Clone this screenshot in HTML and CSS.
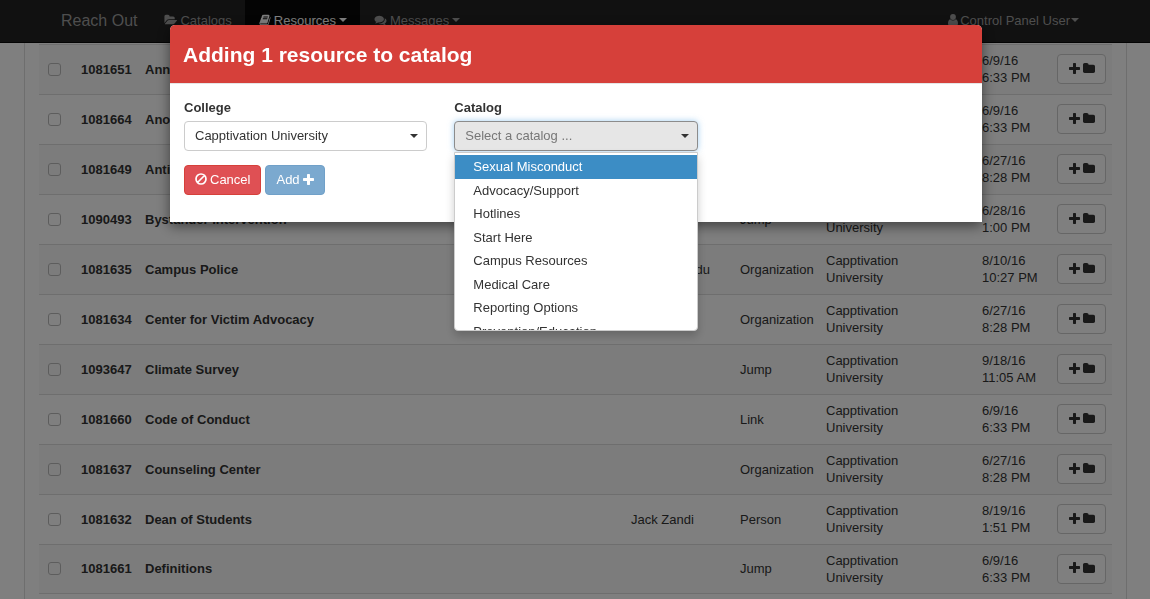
FILE: index.html
```html
<!DOCTYPE html>
<html lang="en">
<head>
    <meta charset="UTF-8" />
    <title>Reach Out | Resources</title>
    <meta name="viewport" content="width=device-width, initial-scale=1.0" />
    <link rel="stylesheet" href="styles.css">
</head>
<body>

    <!-- Icon set -->
    <svg class="icon-defs" aria-hidden="true">
        <symbol id="i-folder-open" viewBox="0 0 1943 1792"><path d="M1943 952q0 31-31 66l-336 396q-43 51-120.500 86.500t-143.500 35.500h-1088q-34 0-60.500-13t-26.500-43q0-31 31-66l336-396q43-51 120.500-86.500t143.500-35.500h1088q34 0 60.500 13t26.500 43zm-343-344v160h-832q-94 0-197 47.500t-164 119.500l-337 396-5 6q0-4-.5-12.500t-.5-12.500v-960q0-92 66-158t158-66h320q92 0 158 66t66 158v32h544q92 0 158 66t66 158z"/></symbol>
        <symbol id="i-book" viewBox="64 0 1664 1792"><path d="M1703 478q40 57 18 129l-275 906q-19 64-76.500 107.500t-122.500 43.500h-923q-77 0-148.500-53.500t-99.500-131.500q-24-67-2-127 0-4 3-27t4-37q1-8-3-21.500t-3-19.500q2-11 8-21t16.500-23.500 16.500-23.500q23-38 45-91.500t30-91.500q3-10 .5-30t-.5-28q3-11 17-28t17-23q21-36 42-92t25-90q1-9-2.500-32t.5-28q4-13 22-30.500t22-22.500q19-26 42.500-84.500t27.500-96.500q1-8-3-25.500t-2-26.500q2-8 9-18t18-23 17-21q8-12 16.500-30.500t15-35 16-36 19.500-32 26.500-23.500 36-11.500 47.500 5.500l-1 3q38-9 51-9h761q74 0 114 56t18 130l-274 906q-36 119-71.500 153.500t-128.500 34.500h-869q-27 0-38 15-11 16-1 43 24 70 144 70h923q29 0 56-15.500t35-41.500l300-987q7-22 5-57 38 15 59 43zm-1064 2q-4 13 2 22.500t20 9.500h608q13 0 25.500-9.500t16.500-22.500l21-64q4-13-2-22.500t-20-9.500h-608q-13 0-25.500 9.500t-16.500 22.500zm-83 256q-4 13 2 22.500t20 9.500h608q13 0 25.500-9.500t16.500-22.500l21-64q4-13-2-22.500t-20-9.500h-608q-13 0-25.500 9.500t-16.500 22.500z"/></symbol>
        <symbol id="i-comments" viewBox="0 0 1792 1792"><path d="M1408 768q0 139-94 257t-256.500 186.500-353.500 68.500q-86 0-176-16-124 88-278 128-36 9-86 16h-3q-11 0-20.500-8t-11.500-21q-1-3-1-6.500t.5-6.500 2-6l2.500-5 3.500-5.500 4-5 4.500-5 4-4.500q5-6 23-25t26-29.500 22.500-29 25-38.500 20.500-44q-124-72-195-177t-71-224q0-139 94-257t256.500-186.500 353.500-68.500 353.500 68.500 256.500 186.500 94 257zm384 256q0 120-71 224.500t-195 176.500q10 24 20.500 44t25 38.500 22.500 29 26 29.500 23 25q1 1 4 4.500t4.500 5 4 5 3.500 5.500l2.500 5 2 6 .5 6.500-1 6.500q-3 14-13 22t-22 7q-50-7-86-16-154-40-278-128-90 16-176 16-271 0-472-132 58 4 88 4 161 0 309-45t264-129q125-92 192-212t67-254q0-77-23-152 129 71 204 178t75 230z"/></symbol>
        <symbol id="i-user" viewBox="0 0 10 12"><circle cx="5" cy="3" r="2.900"/><path d="M2.200 5.300C.7 5.600 0 7.400 0 9.500 0 11 .9 12 2.200 12h5.600C9.100 12 10 11 10 9.500 10 7.400 9.300 5.600 7.800 5.300a3.800 3.800 0 0 1-5.600 0z"/></symbol>
        <symbol id="i-ban" viewBox="0 0 12 12"><path d="M6 1a5 5 0 1 0 0 10A5 5 0 0 0 6 1zM2.500 9.500l7-7" fill="none" stroke="currentColor" stroke-width="1.700"/></symbol>
        <symbol id="i-plus" viewBox="192 128 1408 1408"><path d="M1600 736v192q0 40-28 68t-68 28h-416v416q0 40-28 68t-68 28h-192q-40 0-68-28t-28-68v-416h-416q-40 0-68-28t-28-68v-192q0-40 28-68t68-28h416v-416q0-40 28-68t68-28h192q40 0 68 28t28 68v416h416q40 0 68 28t28 68z"/></symbol>
        <symbol id="i-folder" viewBox="64 128 1664 1408"><path d="M1728 608v704q0 92-66 158t-158 66h-1216q-92 0-158-66t-66-158v-960q0-92 66-158t158-66h320q92 0 158 66t66 158v32h672q92 0 158 66t66 158z"/></symbol>
    </svg>

    <nav class="navbar">
        <a class="brand" href="#">Reach Out</a>
        <a class="nav-link" href="#"><svg class="icon icon-wide"><use href="#i-folder-open"/></svg>Catalogs</a>
        <a class="nav-link active" href="#"><svg class="icon"><use href="#i-book"/></svg>Resources<span class="caret"></span></a>
        <a class="nav-link" href="#"><svg class="icon icon-wide"><use href="#i-comments"/></svg>Messages<span class="caret"></span></a>
        <a class="nav-link user-link" href="#"><svg class="icon icon-user"><use href="#i-user"/></svg>Control Panel User<span class="caret"></span></a>
    </nav>

    <main class="panel">
        <table class="resources">
            <colgroup>
                <col class="col-check"><col class="col-id"><col class="col-name"><col class="col-contact">
                <col class="col-type"><col class="col-college"><col class="col-date"><col class="col-add">
            </colgroup>
            <tbody id="resourceRows"></tbody>
        </table>
    </main>

    <div class="backdrop"></div>

    <div class="modal" role="dialog" aria-labelledby="modalTitle">
        <form class="modal-dialog">
            <div class="modal-header">
                <h1 id="modalTitle">Adding 1 resource to catalog</h1>
            </div>
            <div class="modal-body">
                <div class="fields">
                    <div class="field">
                        <label for="college">College</label>
                        <div class="picker">
                            <select id="college"><option>Capptivation University</option></select>
                            <span class="caret"></span>
                        </div>
                    </div>
                    <div class="field">
                        <label for="catalog">Catalog</label>
                        <div class="picker open">
                            <select id="catalog"><option>Select a catalog ...</option></select>
                            <span class="caret"></span>
                            <ul class="menu" role="listbox" aria-label="Catalog">
                                <li class="selected" role="option" aria-selected="true">Sexual Misconduct</li>
                                <li role="option">Advocacy/Support</li>
                                <li role="option">Hotlines</li>
                                <li role="option">Start Here</li>
                                <li role="option">Campus Resources</li>
                                <li role="option">Medical Care</li>
                                <li role="option">Reporting Options</li>
                                <li role="option">Prevention/Education</li>
                            </ul>
                        </div>
                    </div>
                </div>
                <div class="actions">
                    <button type="button" class="btn btn-danger"><svg class="icon"><use href="#i-ban"/></svg>Cancel</button>
                    <button type="button" class="btn btn-primary" disabled>Add<svg class="icon icon-plus"><use href="#i-plus"/></svg></button>
                </div>
            </div>
        </form>
    </div>

    <script src="script.js"></script>
</body>
</html>
```
FILE: styles.css
```css
* {
    box-sizing: border-box;
}

body {
    display: flex;
    flex-direction: column;
    height: 100vh;
    margin: 0;
    overflow: hidden; /* page does not scroll while the modal is open */
    background: #fff;
    color: #333;
    font-family: "Liberation Sans", Arial, sans-serif;
    font-size: 13px;
    line-height: 17px;
}

.icon-defs {
    display: none;
}

.icon {
    width: 12px;
    height: 12px;
    flex: none;
    fill: currentColor;
}

.icon-wide {
    width: 13px;
}

.icon-user {
    width: 10px;
}

.icon-plus {
    width: 11px;
    height: 11px;
}

.caret {
    border: 4px solid transparent;
    border-top-color: currentColor;
    border-bottom: 0;
}

/* Navbar */
.navbar {
    display: flex;
    flex: none;
    height: 43px;
    padding: 0 58px 0 61px;
    background: #222;
    border-bottom: 1px solid #080808;
}

.navbar a {
    display: flex;
    align-items: center;
    padding-bottom: 2px;
    color: #9d9d9d;
    text-decoration: none;
}

.navbar .brand {
    margin-right: 13px;
    font-size: 16px;
}

.navbar .nav-link {
    gap: 3px;
    padding-left: 14px;
    padding-right: 13px;
}

.navbar .active {
    background: #080808;
    color: #fff;
}

.navbar .user-link {
    margin-left: auto;
    gap: 2px;
}

.user-link .caret {
    margin-left: -1px;
}

/* Resource list */
.panel {
    flex: 1 0 auto;
    margin: 0 23px 0 24px;
    padding: 1px 14px;
    border: 1px solid #ddd;
    border-width: 0 1px;
}

.resources {
    width: 100%;
    table-layout: fixed;
    border-collapse: separate;
    border-spacing: 0;
}

.resources td {
    height: 50px;
    padding: 0 7px 1px;
    border-top: 1px solid #ddd;
}

.resources tr:nth-child(odd) {
    background: #f9f9f9;
}

.resources tr:last-child td {
    border-bottom: 1px solid #ddd;
}

.resources .strong {
    font-weight: bold;
}

.col-check { width: 35px; }
.col-id { width: 64px; }
.col-contact { width: 109px; }
.col-type { width: 86px; }
.col-college { width: 156px; }
.col-date { width: 75px; }
.col-add { width: 62px; }

.resources input {
    display: block;
    appearance: none;
    width: 13px;
    height: 13px;
    margin: 0 2px;
    border: 1px solid #bbb;
    border-radius: 3px;
}

.btn-add {
    display: flex;
    align-items: center;
    justify-content: center;
    gap: 3px;
    width: 49px;
    height: 30px;
    padding: 0 0 2px;
    background: #fff;
    border: 1px solid #ccc;
    border-radius: 4px;
    color: #333;
}

/* Modal */
.backdrop {
    position: fixed;
    inset: 0;
    background: rgba(0, 0, 0, 0.5);
}

.modal {
    position: fixed;
    inset: 0;
    padding: 25px 15px 25px 17px;
}

.modal-dialog {
    max-width: 812px;
    margin: 0 auto;
    background: #fff;
    border-radius: 5px 5px 0 0;
    box-shadow: 0 4px 13px rgba(0, 0, 0, 0.5);
}

.modal-header {
    padding: 17px 13px 15px;
    background: #d6403a;
    border-bottom: 1px solid #e5e5e5;
    border-radius: 5px 5px 0 0;
    color: #fff;
}

.modal-header h1 {
    margin: 0;
    font-size: 21px;
    line-height: 26px;
}

.modal-body {
    padding: 15px 14px 27px;
}

.fields {
    display: grid;
    grid-template-columns: repeat(3, 1fr);
    gap: 27px;
}

.field label {
    display: block;
    margin-bottom: 5px;
    font-weight: bold;
}

.picker {
    position: relative;
    color: #333;
}

.picker select {
    display: block;
    appearance: none;
    width: 100%;
    height: 30px;
    padding: 0 24px 2px 10px;
    background: #fff;
    border: 1px solid #ccc;
    border-radius: 4px;
    color: inherit;
    font: inherit;
}

.picker .caret {
    position: absolute;
    top: 13px;
    right: 9px;
}

.picker.open select {
    background: #e6e6e6;
    border-color: #8c8c8c;
    box-shadow: 0 0 6px rgba(102, 175, 233, 0.6);
    color: #777;
}

.menu {
    display: grid;
    grid-auto-rows: 24px 23px;
    position: absolute;
    top: 31px;
    left: 0;
    width: 100%;
    height: 179px;
    margin: 0;
    padding: 2px 0;
    overflow: hidden;
    list-style: none;
    background: #fff;
    border: 1px solid #ccc;
    border-radius: 0 0 4px 4px;
    box-shadow: 0 5px 10px rgba(0, 0, 0, 0.2);
}

.menu li {
    padding: 3px 18px;
}

.menu .selected {
    background: #3c8dc5;
    color: #fff;
}

.actions {
    display: flex;
    gap: 4px;
    margin-top: 14px;
}

.btn {
    display: flex;
    align-items: center;
    gap: 3px;
    height: 30px;
    padding: 0 10px 2px;
    border: 1px solid;
    border-radius: 4px;
    color: #fff;
    font: inherit;
}

.btn-danger {
    background: #df5054;
    border-color: #d6403a;
}

.btn-primary {
    background: #7ba9cf;
    border-color: #70a0c8;
}
```
FILE: script.js
```js
const resources = [
    ["1081651", "Annual Report", "", "", "6/9/16", "6:33 PM"],
    ["1081664", "Anonymous Report", "", "", "6/9/16", "6:33 PM"],
    ["1081649", "Anti-Retaliation", "", "", "6/27/16", "8:28 PM"],
    ["1090493", "Bystander Intervention", "", "Jump", "6/28/16", "1:00 PM"],
    ["1081635", "Campus Police", "police@c.edu", "Organization", "8/10/16", "10:27 PM"],
    ["1081634", "Center for Victim Advocacy", "", "Organization", "6/27/16", "8:28 PM"],
    ["1093647", "Climate Survey", "", "Jump", "9/18/16", "11:05 AM"],
    ["1081660", "Code of Conduct", "", "Link", "6/9/16", "6:33 PM"],
    ["1081637", "Counseling Center", "", "Organization", "6/27/16", "8:28 PM"],
    ["1081632", "Dean of Students", "Jack Zandi", "Person", "8/19/16", "1:51 PM"],
    ["1081661", "Definitions", "", "Jump", "6/9/16", "6:33 PM"]
];

document.getElementById("resourceRows").innerHTML = resources.map(([id, name, contact, type, day, time]) => `
    <tr>
        <td><input type="checkbox" aria-label="Select ${name}"></td>
        <td class="strong">${id}</td>
        <td class="strong">${name}</td>
        <td>${contact}</td>
        <td>${type}</td>
        <td>Capptivation<br>University</td>
        <td>${day}<br>${time}</td>
        <td><button type="button" class="btn-add" aria-label="Add ${name} to catalog">
            <svg class="icon icon-plus"><use href="#i-plus"/></svg><svg class="icon icon-folder"><use href="#i-folder"/></svg>
        </button></td>
    </tr>`).join("");
```
